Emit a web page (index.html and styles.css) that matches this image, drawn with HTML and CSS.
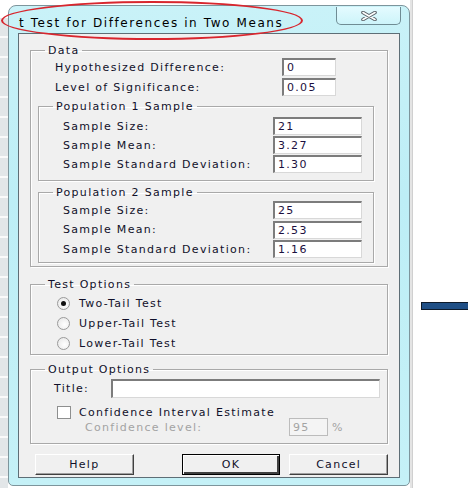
FILE: index.html
```html
<!DOCTYPE html>
<html lang="en">

<head>
    <meta charset="UTF-8">
    <title>t Test for Differences in Two Means</title>
    <link rel="stylesheet" href="styles.css">
</head>

<body>
    <div class="desk__left"></div>

    <div class="dlg">
        <div class="dlg__titlebar">
            <span class="dlg__title">t Test for Differences in Two Means</span>
            <div class="dlg__close">
                <svg width="16" height="10" viewBox="0 0 16 10">
                    <path d="M2 1.5 L14 8.5 M14 1.5 L2 8.5" stroke="#5a6268" stroke-width="3.6" stroke-linecap="round" fill="none" />
                    <path d="M2 1.5 L14 8.5 M14 1.5 L2 8.5" stroke="#fff" stroke-width="1.6" stroke-linecap="round" fill="none" />
                </svg>
            </div>
        </div>

        <div class="dlg__client">
            <fieldset class="grp grp--data">
                <legend>Data</legend>
                <div class="row row--data">
                    <label>Hypothesized Difference:</label>
                    <input class="field field--short" type="text" value="0">
                </div>
                <div class="row row--data">
                    <label>Level of Significance:</label>
                    <input class="field field--short" type="text" value="0.05">
                </div>

                <fieldset class="grp grp--pop grp--pop1">
                    <legend>Population 1 Sample</legend>
                    <div class="row row--pop">
                        <label>Sample Size:</label>
                        <input class="field field--mid" type="text" value="21">
                    </div>
                    <div class="row row--pop">
                        <label>Sample Mean:</label>
                        <input class="field field--mid" type="text" value="3.27">
                    </div>
                    <div class="row row--pop">
                        <label>Sample Standard Deviation:</label>
                        <input class="field field--mid" type="text" value="1.30">
                    </div>
                </fieldset>

                <fieldset class="grp grp--pop grp--pop2">
                    <legend>Population 2 Sample</legend>
                    <div class="row row--pop">
                        <label>Sample Size:</label>
                        <input class="field field--mid" type="text" value="25">
                    </div>
                    <div class="row row--pop">
                        <label>Sample Mean:</label>
                        <input class="field field--mid" type="text" value="2.53">
                    </div>
                    <div class="row row--pop">
                        <label>Sample Standard Deviation:</label>
                        <input class="field field--mid" type="text" value="1.16">
                    </div>
                </fieldset>
            </fieldset>

            <fieldset class="grp grp--tests">
                <legend>Test Options</legend>
                <div class="opt"><span class="radio radio--on"></span>Two-Tail Test</div>
                <div class="opt"><span class="radio"></span>Upper-Tail Test</div>
                <div class="opt"><span class="radio"></span>Lower-Tail Test</div>
            </fieldset>

            <fieldset class="grp grp--output">
                <legend>Output Options</legend>
                <div class="row row--title">
                    <label>Title:</label>
                    <input class="field field--long" type="text" value="">
                </div>
                <div class="opt opt--check"><span class="check"></span>Confidence Interval Estimate</div>
                <div class="row row--conf">
                    <label>Confidence level:</label>
                    <input class="field field--off" type="text" value="95" disabled>
                    <span class="pct">%</span>
                </div>
            </fieldset>

            <div class="dlg__buttons">
                <button class="btn btn--help">Help</button>
                <button class="btn btn--ok">OK</button>
                <button class="btn btn--cancel">Cancel</button>
            </div>
        </div>
    </div>

    <div class="desk__right">
        <div class="arrow"></div>
    </div>

    <div class="mark"></div>
</body>

</html>
```

FILE: styles.css
```css
* {
    box-sizing: border-box;
}

body {
    margin: 0;
    width: 468px;
    height: 488px;
    display: flex;
    position: relative;
    overflow: hidden;
    background-color: #fff;
    font: 11px "DejaVu Sans", Verdana, sans-serif;
    letter-spacing: 1.3px;
    color: #10102a;
}

.desk__left {
    width: 8px;
    margin-top: 18px;
    background-color: #e2e6e8;
    background-image: repeating-linear-gradient(to bottom, transparent 0, transparent 18px, #fafafa 18px, #fafafa 20px);
}

.desk__right {
    flex: 1;
    border-left: 2px solid #e4e4e4;
    background: linear-gradient(to right, #d0d0d0 0, #d0d0d0 1px, #fff 1px);
    padding-top: 302px;
    padding-left: 9px;
}

.arrow {
    height: 8px;
    background-color: #1f4f86;
    border: 1px solid #0d1a2a;
    margin-right: -4px;
}

.dlg {
    width: 402px;
    height: 481px;
    margin-top: 5px;
    padding: 0 9px 7px 9px;
    border: 1px solid #7d959c;
    border-radius: 8px 8px 5px 5px;
    background: linear-gradient(to bottom, #c9f2f8, #bdeef6 40%, #c5f1f7);
    display: flex;
    flex-direction: column;
}

.dlg__titlebar {
    height: 27px;
    display: flex;
    align-items: flex-start;
    justify-content: space-between;
}

.dlg__title {
    font-size: 12px;
    letter-spacing: 1.6px;
    color: #000;
    padding-top: 10px;
    padding-left: 1px;
}

.dlg__close {
    width: 65px;
    height: 18px;
    margin-top: 1px;
    margin-right: -1px;
    border: 1px solid #6f8c94;
    border-top: 0;
    border-radius: 0 0 5px 5px;
    background: linear-gradient(to bottom, #e4fbff, #cdf4fa);
    display: flex;
    align-items: center;
    justify-content: center;
}

.dlg__client {
    flex: 1;
    background-color: #f0f0f0;
    border: 1px solid #5e6e76;
    padding: 10px 11px 0 11px;
}

/* group boxes */
.grp {
    margin: 0;
    padding: 0;
    border: 1px solid #a9a9a9;
    box-shadow: inset 1px 1px 0 #fff, 1px 1px 0 #fff;
    min-width: 0;
}

.grp legend {
    margin-left: 14px;
    padding: 0 3px;
    line-height: 13px;
    color: #10102a;
}

.grp--data {
    padding-top: 1px;
    padding-bottom: 3px;
}

.grp--pop {
    margin: 4px 13px 0 7px;
    padding-top: 4px;
    padding-bottom: 7px;
}

.grp--pop2 {
    margin-top: 5px;
    padding-top: 2px;
    padding-bottom: 4px;
}

.grp--pop2 .row--pop {
    margin-bottom: 1.5px;
}

.grp--tests {
    margin-top: 11px;
    padding: 2px 0 1px 0;
}

.grp--tests .opt {
    padding-left: 26px;
}

.grp--output {
    margin-top: 8px;
    padding: 3px 0 7px 0;
}

/* rows */
.row {
    display: flex;
    align-items: center;
}

.row label {
    white-space: nowrap;
}

.row--data {
    padding-left: 24px;
    height: 18px;
    margin-bottom: 2px;
}

.row--data label {
    width: 227px;
}

.row--pop {
    padding-left: 24px;
    height: 18px;
    margin-bottom: 1px;
}

.grp--pop .row--pop:last-child {
    margin-bottom: 0;
}

.row--pop label {
    width: 210px;
}

.row--title {
    height: 19px;
    padding-left: 23px;
}

.row--title label {
    width: 57px;
}

.row--conf {
    height: 18px;
    margin-top: -2px;
    padding-left: 54px;
    color: #a3a3a3;
}

.row--conf label {
    width: 204px;
}

.pct {
    margin-left: 4px;
}

/* text fields */
.field {
    height: 100%;
    border-top: 2px solid #7c7c7c;
    border-left: 2px solid #7c7c7c;
    border-right: 1px solid #d8d8d8;
    border-bottom: 1px solid #d8d8d8;
    background-color: #fff;
    padding: 0 0 0 3px;
    font: 11px "DejaVu Sans", Verdana, sans-serif;
    letter-spacing: 1.3px;
    color: #1c1040;
    outline: 0;
}

.field--short {
    width: 54px;
}

.field--mid {
    width: 89px;
}

.field--long {
    width: 269px;
}

.field--off {
    width: 39px;
    border: 1px solid #bcbcbc;
    background-color: #f4f4f4;
    color: #a3a3a3;
}

/* radios and checkbox */
.opt {
    display: flex;
    align-items: center;
    height: 20px;
    color: #10102a;
}

.radio {
    width: 13px;
    height: 13px;
    margin-right: 9px;
    border: 1px solid #9a9a9a;
    border-radius: 50%;
    background: radial-gradient(circle at 60% 60%, #fff, #e4e4e4);
    display: flex;
    align-items: center;
    justify-content: center;
}

.radio--on::after {
    content: "";
    width: 5px;
    height: 5px;
    border-radius: 50%;
    background-color: #111;
}

.opt--check {
    height: 15px;
    margin-top: 7px;
    padding-left: 26px;
}

.check {
    width: 14px;
    height: 13px;
    margin-right: 8px;
    border: 1px solid #8e8f8f;
    background-color: #fff;
}

/* buttons */
.dlg__buttons {
    display: flex;
    margin-top: 10px;
}

.btn {
    width: 99px;
    height: 21px;
    padding: 0;
    background-color: #f0f0f0;
    border: 1px solid;
    border-color: #fff #404040 #404040 #fff;
    box-shadow: inset -1px -1px 0 #a0a0a0;
    font: 11px "DejaVu Sans", Verdana, sans-serif;
    letter-spacing: 1.3px;
    color: #10102a;
}

.btn--help {
    margin-left: 5px;
}

.btn--ok {
    margin-left: 48px;
    border: 1px solid #000;
    box-shadow: inset 1px 1px 0 #fff, inset -2px -2px 0 #404040;
}

.btn--cancel {
    margin-left: 9px;
}

/* red annotation ring round the title */
.mark {
    position: absolute;
    left: 1px;
    top: 1px;
    width: 302px;
    height: 39px;
    border: 2px solid #d8262e;
    border-radius: 50%;
    pointer-events: none;
}
```
